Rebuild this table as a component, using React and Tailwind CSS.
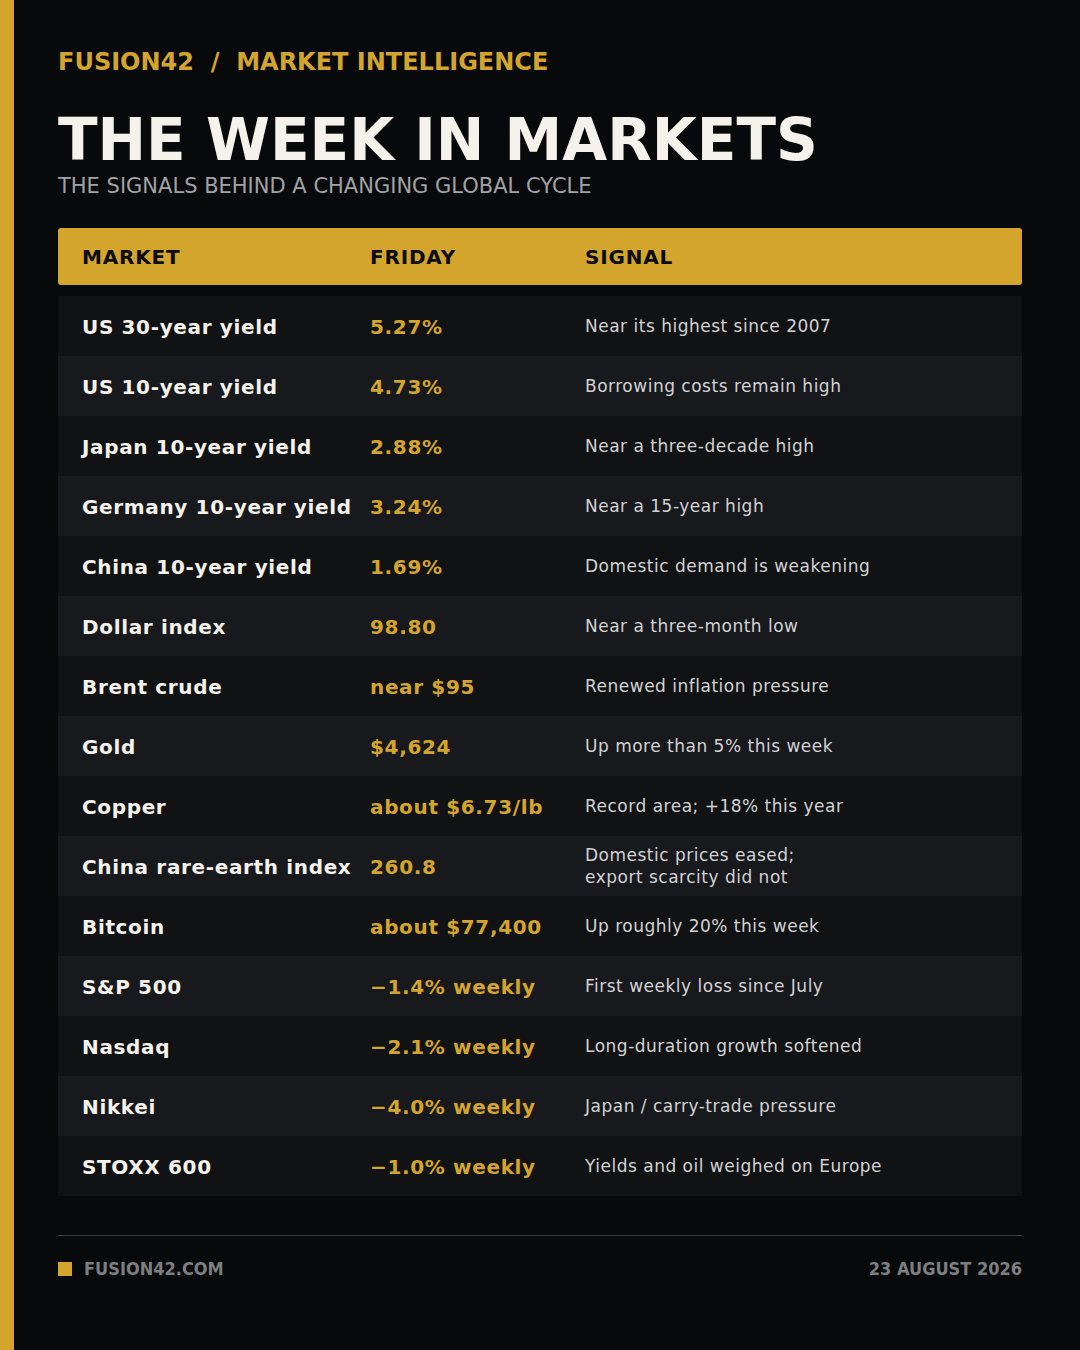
const rows = [
  ["US 30-year yield", "5.27%", ["Near its highest since 2007"]],
  ["US 10-year yield", "4.73%", ["Borrowing costs remain high"]],
  ["Japan 10-year yield", "2.88%", ["Near a three-decade high"]],
  ["Germany 10-year yield", "3.24%", ["Near a 15-year high"]],
  ["China 10-year yield", "1.69%", ["Domestic demand is weakening"]],
  ["Dollar index", "98.80", ["Near a three-month low"]],
  ["Brent crude", "near $95", ["Renewed inflation pressure"]],
  ["Gold", "$4,624", ["Up more than 5% this week"]],
  ["Copper", "about $6.73/lb", ["Record area; +18% this year"]],
  ["China rare-earth index", "260.8", ["Domestic prices eased;", "export scarcity did not"]],
  ["Bitcoin", "about $77,400", ["Up roughly 20% this week"]],
  ["S&P 500", "\u22121.4% weekly", ["First weekly loss since July"]],
  ["Nasdaq", "\u22122.1% weekly", ["Long-duration growth softened"]],
  ["Nikkei", "\u22124.0% weekly", ["Japan / carry-trade pressure"]],
  ["STOXX 600", "\u22121.0% weekly", ["Yields and oil weighed on Europe"]],
];

export default function App() {
  return (
    <div className="flex min-h-[1350px] w-[1080px] bg-[#08090b] font-['DejaVu_Sans',sans-serif]">
      <div className="w-[14px] shrink-0 bg-[#d4a52c]" />
      <div className="flex flex-1 flex-col pl-[44px] pr-[58px] pt-[47px]">
        <div className="text-[24px] font-bold leading-[30px] text-[#d4a52c] whitespace-pre">
          FUSION42  /  MARKET INTELLIGENCE
        </div>
        <h1 className="mt-[33px] text-[58px] font-bold leading-[60px] text-[#f5f2ec]">
          THE WEEK IN MARKETS
        </h1>
        <div className="mt-[4px] text-[21px] leading-[24px] text-[#a1a2a6]">
          THE SIGNALS BEHIND A CHANGING GLOBAL CYCLE
        </div>

        <div className="mt-[30px] grid h-[57px] grid-cols-[288px_215px_1fr] items-center rounded-[3px] bg-[#d4a52c] text-[20px] font-bold tracking-[0.8px] text-[#0b0b0c]">
          <div className="pl-[24px]">MARKET</div>
          <div className="pl-[24px]">FRIDAY</div>
          <div className="pl-[24px]">SIGNAL</div>
        </div>

        <div className="mt-[11px] flex flex-col">
          {rows.map(([name, value, signal], i) => (
            <div
              key={name}
              className={`grid h-[60px] grid-cols-[288px_215px_1fr] items-center ${i % 2 === 0 ? "bg-[#111214]" : "bg-[#18191d]"}`}
            >
              <div className="pl-[24px] pt-px text-[20px] font-bold tracking-[0.65px] text-[#f5f2ec] whitespace-nowrap">{name}</div>
              <div className="pl-[24px] pt-px text-[20px] font-bold tracking-[0.65px] text-[#d4a52c] whitespace-nowrap">{value}</div>
              <div className="pl-[24px] text-[17px] leading-[22px] tracking-[0.5px] text-[#d2d2d4]">
                {signal.map((s) => (
                  <div key={s}>{s}</div>
                ))}
              </div>
            </div>
          ))}
        </div>

        <div className="mt-[39px] h-px bg-[#3a3b3e]" />
        <div className="mt-[21px] flex items-center justify-between font-['DejaVu_Sans_Condensed','DejaVu_Sans',sans-serif] text-[18px] font-bold leading-[24px] text-[#7d7e82]">
          <div className="flex items-center gap-[12px]">
            <span className="h-[14px] w-[14px] bg-[#d4a52c]" />
            <span>FUSION42.COM</span>
          </div>
          <span>23 AUGUST 2026</span>
        </div>
      </div>
    </div>
  );
}
